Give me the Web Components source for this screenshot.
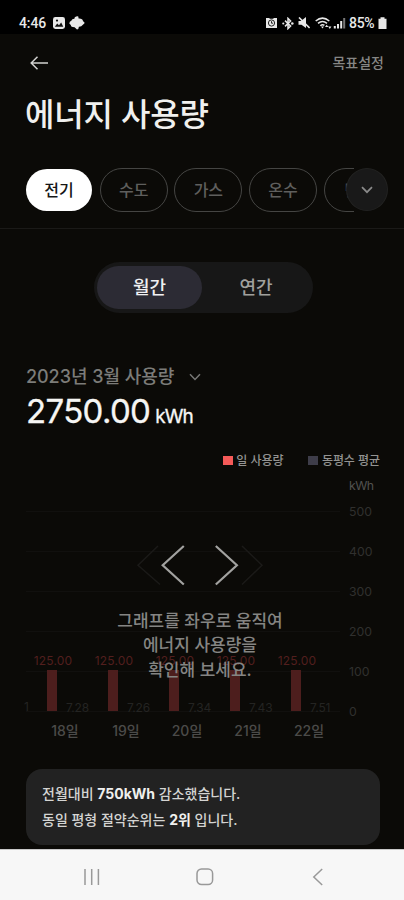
<!DOCTYPE html>
<html lang="ko">
<head>
<meta charset="utf-8">
<meta name="viewport" content="width=device-width">
<title>에너지 사용량</title>
<style>
html,body{margin:0;background:#0b0a07}
body{font-family:Inter,"Noto Sans CJK KR",sans-serif;width:404px;height:900px;overflow:hidden}
</style>
</head>
<body>
<energy-app></energy-app>
<script>
const define = (name, css, html) => customElements.define(name, class extends HTMLElement {
  constructor() {
    super();
    const t = document.createElement('template');
    t.innerHTML = `<style>*{box-sizing:border-box}${css}</style>${typeof html === 'function' ? html(this) : html}`;
    this.attachShadow({mode: 'open'}).append(t.content.cloneNode(true));
  }
});

define('status-bar', `
:host{display:flex;height:34px;background:#000;color:#e8e8e8;padding:12px 17px 0 19px;justify-content:space-between;align-items:center;font:500 14px/18px Roboto,sans-serif}
div{display:flex;align-items:center}
.l{gap:5px}
svg{display:block;flex:none}
.l span{letter-spacing:-.1px;width:29px;white-space:nowrap}
.r span{width:27px;letter-spacing:-.3px;white-space:nowrap}`, `
<div class="l"><span>4:46</span>
<svg width="12" height="12" viewBox="0 0 12 12"><rect width="12" height="12" rx="2.4" fill="#e8e8e8"/><path d="M1.8 9.8 4.2 6.6 6 8.2 8.2 5.6 10.3 9.8Z" fill="#111"/><circle cx="4" cy="3.6" r="1.1" fill="#111"/></svg>
<svg style="margin-left:-1px" width="16" height="14" viewBox="0 0 16 14"><path d="M5.8 1.2Q8 -.4 9.3 .4L9.6 2.4Q13.8 2.2 14 5.2Q16 6 15.3 7.6L13.6 9Q12.6 10.9 9.9 10.8Q9.7 13.6 8 13.6L5.6 11.3Q1.8 11.2 1.8 9L.3 7.4Q.4 5.6 2.3 4.8Q3 2.6 5.4 2.7Z" fill="#e8e8e8"/></svg></div>
<div class="r">
<svg width="11" height="12" viewBox="0 0 11 12"><path d="M0 1h3l1 .7h3L8 1h3v10H0Z" fill="#e8e8e8"/><circle cx="5.5" cy="6" r="3.1" fill="none" stroke="#222"/><path d="M5.5 4.2V6.2H7" fill="none" stroke="#222"/></svg>
<svg style="margin-left:5px" width="12" height="13" viewBox="0 0 12 13"><path d="M3 3.6 8.6 9 6 11.6V1.4L8.6 4 3 9.4" fill="none" stroke="#e8e8e8" stroke-width="1.5"/><circle cx="1.3" cy="6.5" r="1.1" fill="#e8e8e8"/><circle cx="10.3" cy="6.5" r="1.3" fill="#e8e8e8"/></svg>
<svg style="margin-left:4px" width="12" height="12" viewBox="0 0 12 12"><path d="M.5 4H3L8 0V11L3.5 7.8H.5Z" fill="#e8e8e8"/><path d="M1 .5 11.6 11" stroke="#e8e8e8" stroke-width="1.6"/></svg>
<svg style="margin-left:5px" width="18" height="13" viewBox="0 0 18 13"><g fill="none" stroke="#e8e8e8" stroke-width="1.5"><path d="M.7 4Q7.5-1.8 14.3 4M3 6.4Q7.5 2.5 12 6.4M5.3 8.7Q7.5 6.8 9.4 8.4"/></g><path d="M6 9.5h3L7.5 11.5Z" fill="#e8e8e8"/><path d="M10 10 11.7 7.8 13.4 10ZM13.2 9.6h3.2L14.8 12Z" fill="#e8e8e8"/></svg>
<svg style="margin-left:0" width="13" height="12" viewBox="0 0 13 12"><path d="M.8 9h2v2.5h-2ZM4 7h2v4.5H4ZM7.2 4h2v7.5h-2Z" fill="#e8e8e8"/><path d="M10.2 1h2v10.5h-2Z" fill="#777"/></svg>
<span style="margin-left:3px">85%</span>
<svg style="margin-left:2px" width="9" height="12" viewBox="0 0 9 12"><path d="M2.5.2h4v1.5h2V12H.5V1.7h2Z" fill="#e8e8e8"/></svg>
</div>`);

define('page-header', `
:host{display:flex;height:58px;align-items:center;justify-content:space-between;padding:0 20px 0 30px;color:#868684;font-size:14px;line-height:20px;font-weight:500}`, `
<svg width="18" height="14" viewBox="0 0 18 14" fill="none" stroke="#d2d2d0" stroke-width="1.5"><path d="M18 7H1.3M7.5.8 1.2 7 7.5 13.2"/></svg><span><slot></slot></span>`);

define('page-title', `:host{display:block;height:44px;padding:0 0 0 25px;color:#f0f0ee;font-size:32px;line-height:46px;letter-spacing:-.2px;font-weight:500}`, `<slot></slot>`);

define('filter-chip', `
:host{display:block;flex:none;width:68px;height:44px;border:1px solid #454543;border-radius:22px;color:#5f5f5d;font-size:16px;line-height:42px;text-align:center;font-weight:500}
:host(:last-of-type){padding-left:3px}
:host([active]){background:#fff;background-clip:padding-box;border-color:transparent;color:#161616}`, `<slot></slot>`);

define('filter-bar', `
:host{display:flex;height:93px;border-bottom:1px solid #1b1a18;padding:32px 0 16px 25px;position:relative}
.track{display:flex;gap:6.7px;width:329px;overflow:hidden}
.more{position:absolute;left:346px;top:32px;width:42px;height:43px;border-radius:50%;background:#191919;border:1px solid #222221;display:grid;place-items:center}`, `
<div class="track"><slot></slot></div>
<div class="more"><svg width="12" height="8" viewBox="0 0 12 8" fill="none" stroke="#8a8a8a" stroke-width="1.7"><path d="M1 1.2 6 6.2 11 1.2"/></svg></div>`);

define('segment-toggle', `
:host{display:grid;grid-template-columns:105px 1fr;width:219px;height:51px;margin:33px 0 0 94px;padding:4px 3px;border-radius:26px;background:#171717;font-size:18px;line-height:43px;text-align:center;color:#a0a09e;font-weight:500}
::slotted(*){border-radius:22px}
::slotted([aria-selected=true]){background:#2c2b34;color:#f0f0f2}`, `<slot></slot>`);

define('usage-summary', `
:host{display:block;padding:51px 0 0 26px}
.m{display:flex;align-items:center;gap:15px;height:26px;color:#7c7c79;font-size:18px;line-height:26px;font-weight:500;letter-spacing:-.05px}
.v{display:flex;align-items:baseline;height:40px;line-height:40px;font-size:33px;letter-spacing:-.65px;color:#f6f6f4;margin-top:1px;font-weight:400;-webkit-text-stroke:.3px #f6f6f4}
.v small{font-size:19px;margin-left:5px;letter-spacing:-1px;font-weight:400}`, `
<div class="m"><slot name="month"></slot><svg width="12" height="8" viewBox="0 0 12 8" fill="none" stroke="#777775" stroke-width="1.5"><path d="M1 1.2 6 6.4 11 1.2"/></svg></div>
<div class="v"><slot></slot><small><slot name="unit"></slot></small></div>`);

define('chart-legend', `
:host{display:flex;height:20px;justify-content:flex-end;gap:25px;padding-right:24px;margin-top:20px;color:#939391;font-size:12px;line-height:20px;font-weight:500}
div{display:flex;align-items:center;gap:3.5px;letter-spacing:-.05px}
i{width:10px;height:9px;background:#f55a58;margin-top:-1px}
.b{background:#3e3d49}`, `<div><i></i>일 사용량</div><div><i class="b"></i>동평수 평균</div>`);

define('day-bar', `
:host{display:grid;position:relative;width:61px;grid-template-rows:18px 41px 40px;color:#4b4b49;font-size:14px;justify-items:start}
.v{width:54px;text-align:center;color:#521f1e;font-size:12px;line-height:18px;letter-spacing:.15px}
.b{width:10px;height:41px;margin-left:21px;background:#4d1e1d}
.d{width:78px;text-align:center;line-height:40px;font-weight:500}
.a{position:absolute;left:40px;top:47px;font-size:12px;line-height:18px;color:#242422;letter-spacing:-.1px}`,
el => `<span class="v">${el.getAttribute('value')}</span><span class="b"></span><span class="d">${el.getAttribute('day')}</span><span class="a">${el.getAttribute('average')}</span>`);

define('swipe-hint', `
:host{position:absolute;left:0;right:4px;top:73px;display:flex;flex-direction:column;align-items:center;color:#858583;font-size:17px;line-height:24.3px;text-align:center;font-weight:500}
svg{display:block;margin:0 0 23px 0}`, `
<svg width="128" height="42" viewBox="137 544 128 42" fill="none" stroke-width="2.2"><g stroke="#1b1a18" stroke-width="1.5"><path d="M159 546 139 565.2 161 584.5M243 546 263 565.2 243 584.5"/></g><path stroke="#a2a2a0" d="M184.8 546 163.7 565.2 184.8 584.5M216.8 546 237.9 565.2 216.8 584.5"/></svg>
<div><slot></slot></div>`);

define('usage-chart', `
:host{display:grid;grid-template-columns:314px 1fr;position:relative;height:280px;padding-left:26px}
.plot{display:flex;flex-direction:column;position:relative}
.lines{height:241px;background:repeating-linear-gradient(#0000 0 39px,#11100e 39px 40px) 0 1px/100% 240px no-repeat}
.one{position:absolute;left:-2px;top:227px;font-size:12px;line-height:18px;color:#242422}
.days{display:flex;margin-top:-60px}
.axis{display:grid;grid-template-rows:15px;grid-auto-rows:40px;padding:7px 0 0 9px;color:#30302e;font-size:12.3px;line-height:16px}
.axis b{font-weight:400;color:#51514f;line-height:16px;letter-spacing:-.5px}
.axis span{line-height:37px}`, `
<div class="plot"><div class="lines"></div><span class="one">1</span><div class="days"><slot name="day"></slot></div></div>
<div class="axis"><b>kWh</b><span>500</span><span>400</span><span>300</span><span>200</span><span>100</span><span>0</span></div>
<slot></slot>`);

define('info-card', `
:host{display:block;width:354px;height:76px;margin:18px 0 0 26px;border-radius:16px;background:#222;padding:12px 16px;color:#d4d4d2;font-size:14px;line-height:26px;white-space:nowrap;font-weight:500}`, `<slot></slot>`);

define('nav-bar', `
:host{display:flex;height:51px;margin-top:auto;background:#f7f7f7;border-top:1px solid #c8c8c8;padding:4px 80px 0 83px;justify-content:space-between;align-items:center}
svg{display:block}`, `
<svg width="17" height="18" viewBox="0 0 17 18" stroke="#999" stroke-width="1.5"><path d="M2 1V17M8.7 1V17M15.4 1V17"/></svg>
<svg style="margin-right:2px" width="18" height="18" viewBox="0 0 18 18" fill="none" stroke="#999" stroke-width="1.5"><rect x="1" y="1" width="15.6" height="15.6" rx="4.5"/></svg>
<svg width="12" height="18" viewBox="0 0 12 18" fill="none" stroke="#999" stroke-width="1.5"><path d="M10.2 1 1.8 9 10.2 17"/></svg>`);

define('energy-app', `
:host{display:flex;flex-direction:column;width:404px;height:900px;background:#0b0a07;overflow:hidden}
b{font-weight:700;color:#f0f0ee}`, `
<status-bar></status-bar>
<page-header>목표설정</page-header>
<page-title>에너지 사용량</page-title>
<filter-bar><filter-chip active>전기</filter-chip><filter-chip>수도</filter-chip><filter-chip>가스</filter-chip><filter-chip>온수</filter-chip><filter-chip>난방</filter-chip></filter-bar>
<segment-toggle><span aria-selected="true">월간</span><span>연간</span></segment-toggle>
<usage-summary><span slot="month">2023년 3월 사용량</span>2750.00<span slot="unit">kWh</span></usage-summary>
<chart-legend></chart-legend>
<usage-chart>
<day-bar slot="day" day="18일" value="125.00" average="7.28"></day-bar>
<day-bar slot="day" day="19일" value="125.00" average="7.26"></day-bar>
<day-bar slot="day" day="20일" value="125.00" average="7.34"></day-bar>
<day-bar slot="day" day="21일" value="125.00" average="7.43"></day-bar>
<day-bar slot="day" day="22일" value="125.00" average="7.51"></day-bar>
<swipe-hint>그래프를 좌우로 움직여<br>에너지 사용량을<br>확인해 보세요.</swipe-hint>
</usage-chart>
<info-card>전월대비 <b>750kWh</b> 감소했습니다.<br>동일 평형 절약순위는 <b>2위</b> 입니다.</info-card>
<nav-bar></nav-bar>`);
</script>
</body>
</html>
